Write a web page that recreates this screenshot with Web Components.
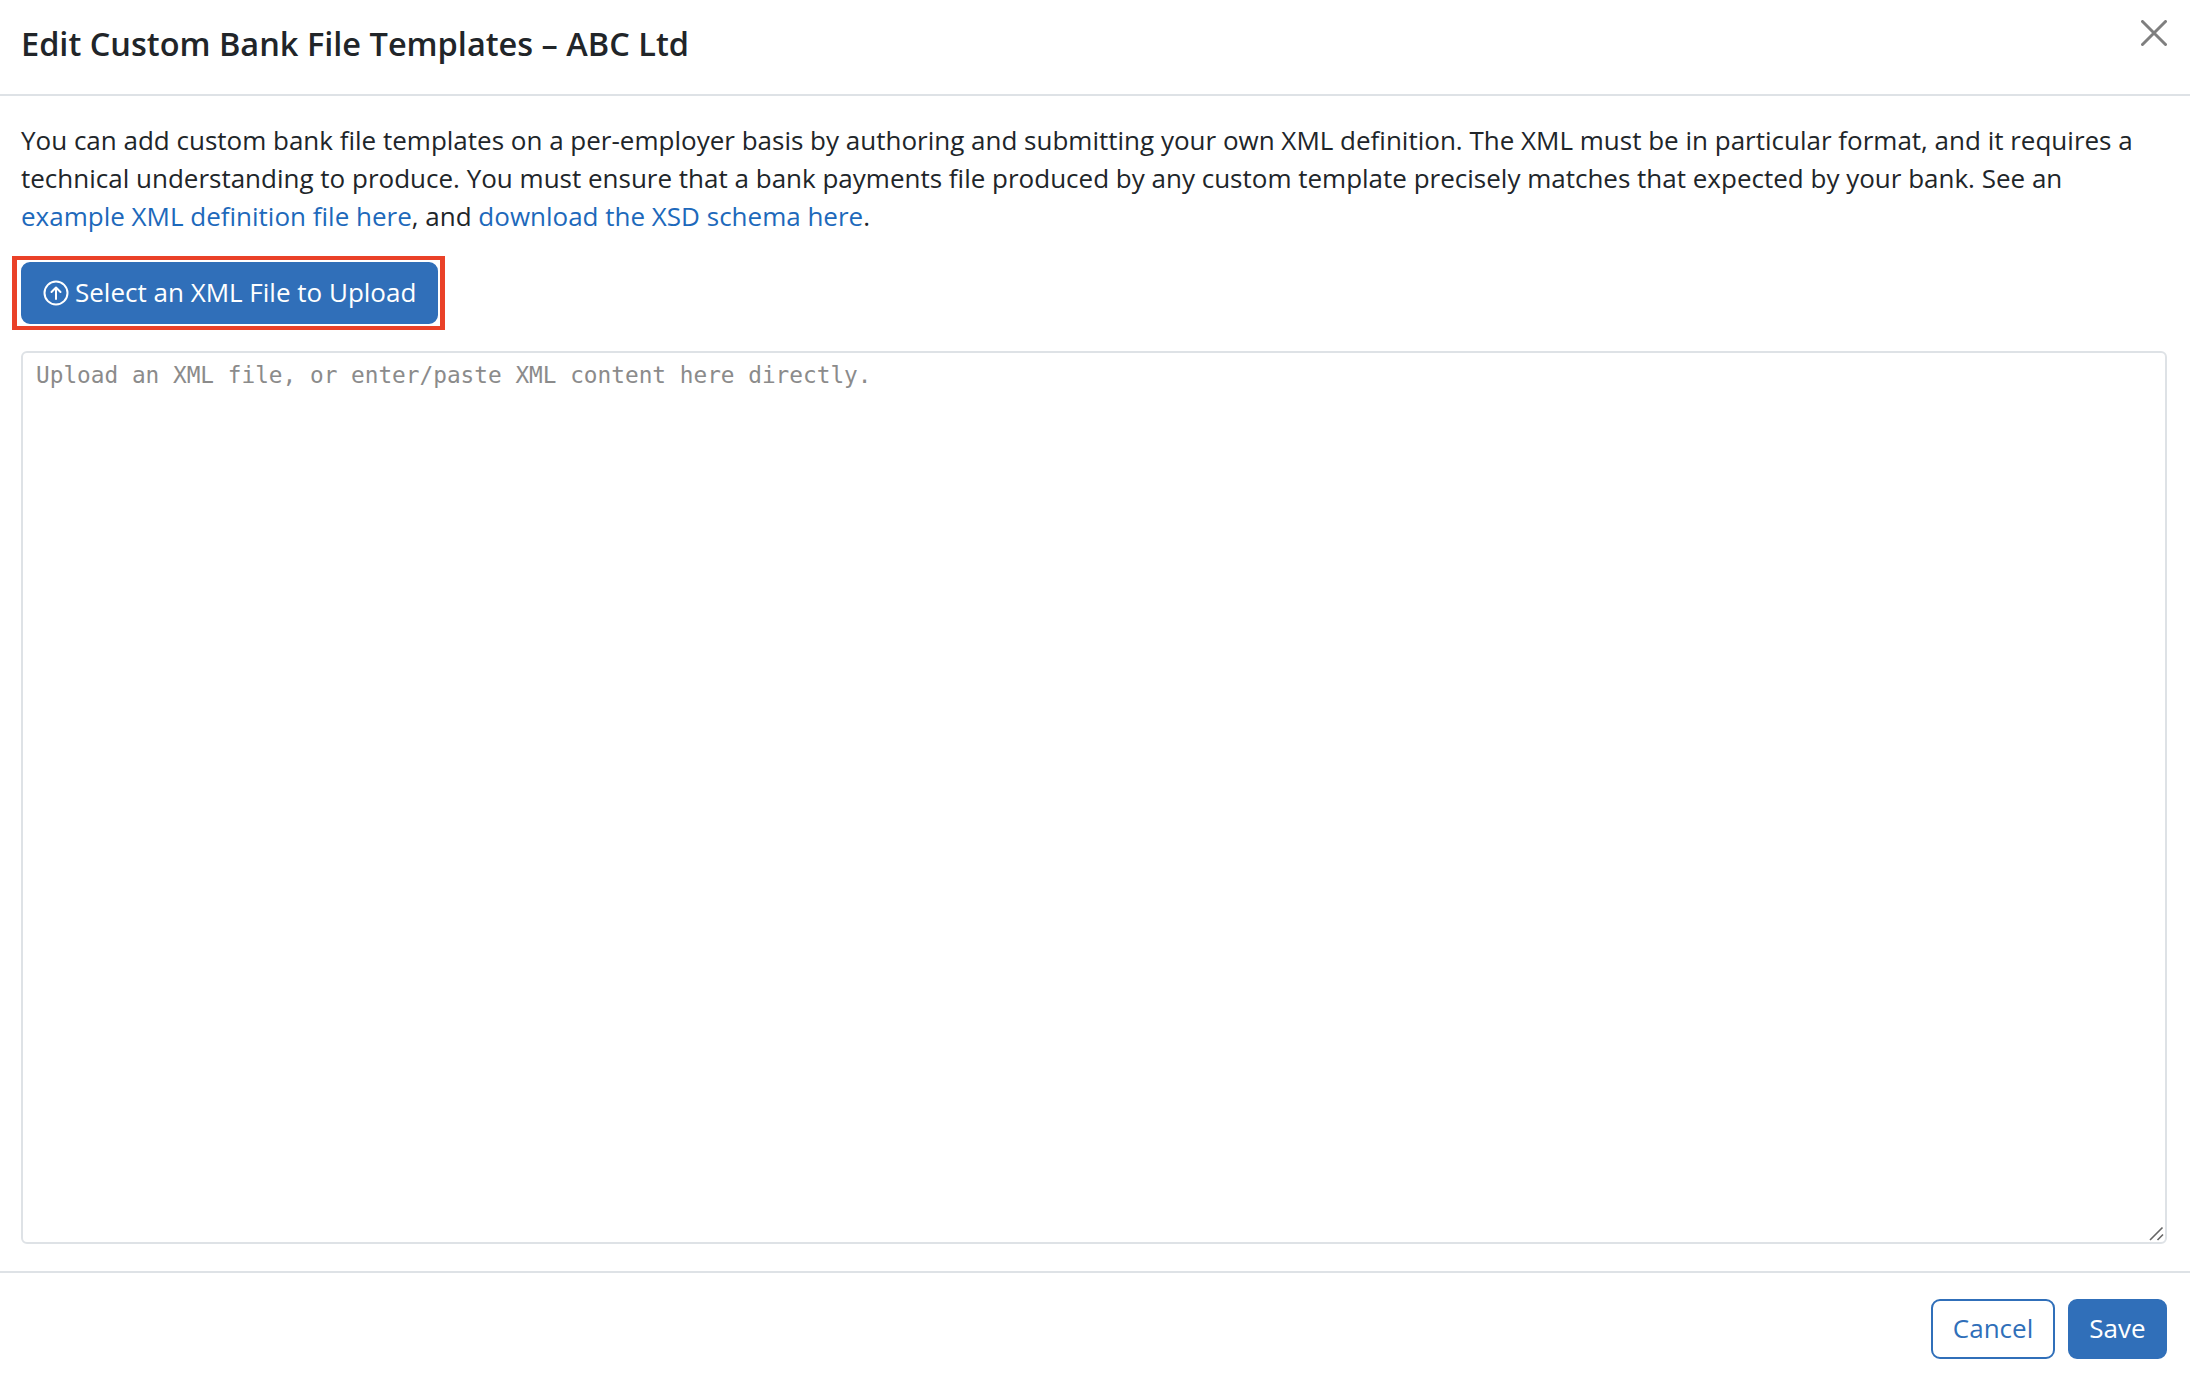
<!DOCTYPE html>
<html lang="en"><head><meta charset="utf-8"><title>Edit Custom Bank File Templates</title>
<style>html,body{margin:0;background:#fff}body{font-family:"Open Sans","Noto Sans",sans-serif;color:#212529}</style>
</head><body>
<template id="t-modal"><style>
:host{display:flex;flex-direction:column;height:1376px;box-sizing:border-box;background:#fff}
header{height:94px;flex:none;box-sizing:border-box;display:flex;justify-content:space-between;padding:0 23px 0 21px;align-items:flex-start}
.rule{height:2px;flex:none;background:#dee2e6}
h1{margin:21px 0 0;font:600 32.5px/1.4 "Open Sans",sans-serif;color:#212529}
button{all:unset;display:block;margin-top:20px;width:26px;height:26px}
svg{display:block}
main{flex:1;display:flex;flex-direction:column;padding:25px 23px 0 21px;min-height:0}
footer{flex:none;border-top:2px solid #dee2e6;height:105px;box-sizing:border-box;padding:26px 23px 0 21px;display:flex;justify-content:flex-end;gap:13px;align-items:flex-start}
</style>
<header><h1><slot name="title"></slot></h1><button aria-label="Close"><svg width="26" height="26" viewBox="0 0 26 26"><path d="M1.5 1.5L24.5 24.5M24.5 1.5L1.5 24.5" stroke="#7f7f7f" stroke-width="3" stroke-linecap="round"/></svg></button></header>
<div class="rule"></div>
<main><slot></slot></main>
<footer><slot name="actions"></slot></footer></template>

<template id="t-intro"><style>
:host{display:block;font:400 26px/38px "Open Sans",sans-serif;color:#212529}
</style><slot></slot></template>

<template id="t-btn"><style>
:host{display:inline-flex;align-items:center;justify-content:center;box-sizing:border-box;height:60px;border-radius:9px;font:400 26px/1 "Open Sans",sans-serif;position:relative;border:2px solid #306fb9;background:#306fb9;color:#fff;padding:0 19.5px 2px}
:host([outline]){background:#fff;color:#306fb9}
:host([tall]){height:62px;padding:0 20px 2px}
</style><slot></slot></template>

<template id="t-upload"><style>
:host{display:block;margin-top:27px;position:relative;width:fit-content}
.mark{position:absolute;left:-9px;right:-7px;top:-6px;bottom:-6px;border-style:solid;border-color:#ea4128;border-width:4px 5px;pointer-events:none}
</style><slot></slot><div class="mark"></div></template>

<template id="t-editor"><style>
:host{display:block;margin-top:27px;height:893px;box-sizing:border-box;position:relative}
textarea{display:block;width:100%;height:893px;box-sizing:border-box;border:2px solid #dee2e6;border-radius:6px;padding:8px 13px;font:400 22.75px/28px "DejaVu Sans Mono",monospace;outline:0;resize:none;color:#212529;margin:0}
textarea::placeholder{color:#8b8b8b;opacity:1}
svg{position:absolute;right:3px;bottom:3px;display:block;pointer-events:none}
</style><textarea placeholder="Upload an XML file, or enter/paste XML content here directly."></textarea><svg width="15" height="15" viewBox="0 0 15 15" fill="none" stroke="#666" stroke-width="1.6"><path d="M1 14L13.5 1.5M8.5 14L14 8.5"/></svg></template>

<template id="t-link"><style>
:host{color:#1d69bb}
</style><slot></slot></template>

<script>
function def(name,tid){customElements.define(name,class extends HTMLElement{constructor(){super();this.attachShadow({mode:'open'}).appendChild(document.getElementById(tid).content.cloneNode(true));}});}
def('bank-modal','t-modal');def('bank-intro','t-intro');def('bank-btn','t-btn');def('bank-upload','t-upload');def('bank-editor','t-editor');def('bank-link','t-link');
</script>
<bank-modal>
<span slot="title">Edit Custom Bank File Templates – ABC Ltd</span>
<bank-intro>You can add custom bank file templates on a per-employer basis by authoring and submitting your own XML definition. The XML must be in particular format, and it requires a technical understanding to produce. You must ensure that a bank payments file produced by any custom template precisely matches that expected by your bank. See an <bank-link>example XML definition file here</bank-link>, and <bank-link>download the XSD schema here</bank-link>.</bank-intro>
<bank-upload><bank-btn tall><svg width="26" height="26" viewBox="0 0 26 26" fill="none" stroke="#fff" stroke-width="2" style="margin-right:6px;position:relative;top:1px"><circle cx="13" cy="13" r="11.5"/><path d="M13 19V7.5M8.5 12L13 7.5L17.5 12" stroke-linecap="round" stroke-linejoin="round"/></svg>Select an XML File to Upload</bank-btn></bank-upload>
<bank-editor></bank-editor>
<bank-btn slot="actions" outline>Cancel</bank-btn>
<bank-btn slot="actions">Save</bank-btn>
</bank-modal>
</body></html>
